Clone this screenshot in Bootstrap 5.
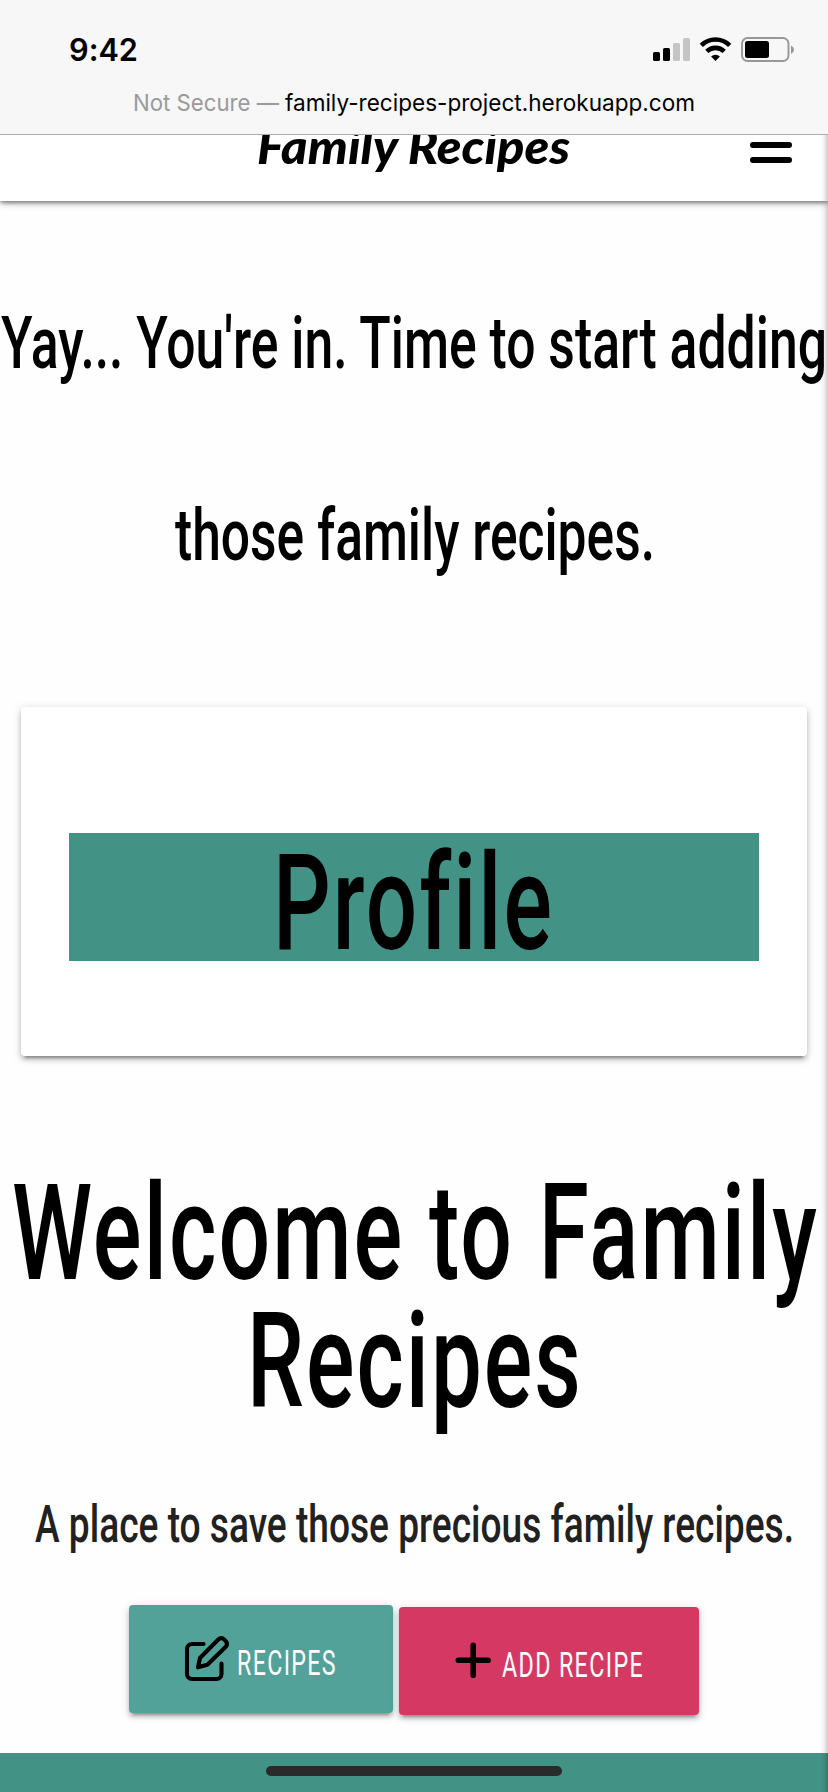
<!DOCTYPE html>
<html lang="en">
<head>
<meta charset="utf-8">
<meta name="viewport" content="width=device-width, initial-scale=1">
<title>Family Recipes</title>
<link href="https://cdn.jsdelivr.net/npm/bootstrap@5.3.0/dist/css/bootstrap.min.css" rel="stylesheet">
<style>
  body { background: #fefefe; font-family: Roboto, sans-serif; color: #000; }
  .screen { width: 828px; height: 1792px; }
  .browser-bar { height: 135px; background: #f7f7f7; border-bottom: 1px solid #adadad; }
  .status-row { height: 75px; padding: 24px 34px 0 70px; }
  .status-icons { margin-top: 10px; }
  .topnav { height: 66px; background: #fff; box-shadow: 0 2px 3px rgba(0,0,0,.28), 0 1px 9px rgba(0,0,0,.22), 0 4px 6px -2px rgba(0,0,0,.2); }
  svg { display: block; flex: none; overflow: visible; }
  svg text { font-family: Roboto, sans-serif; font-weight: 500; font-variant-ligatures: none; }
  text.brand-script { font-family: Lato, sans-serif; font-weight: 900; font-style: italic; font-size: 47px; }
  text.time-text { font-family: Inter, sans-serif; font-weight: 600; font-size: 31.5px; }
  text.url-text { font-family: Inter, sans-serif; font-weight: 400; font-size: 23.5px; }
  text.action-label { font-weight: 400; font-size: 34.3px; letter-spacing: 2px; fill: #fff; }
  text.display-line { letter-spacing: 3px; }
  .greeting { padding-top: 18px; height: 506px; }
  .profile-card { width: 786px; height: 349px; margin-left: 21px; padding: 126px 48px 0; border: 0; border-radius: 4px; background: #fff; box-shadow: 0 4px 4px rgba(0,0,0,.16), 0 6px 2px -4px rgba(0,0,0,.25), 0 2px 10px rgba(0,0,0,.18); }
  .profile-band { height: 128px; background: #429386; }
  .welcome { height: 549px; padding-top: 95px; }
  .action { height: 108px; border-radius: 4px; border: 0; padding: 0; box-shadow: 0 4px 4px rgba(0,0,0,.18), 0 6px 2px -4px rgba(0,0,0,.2), 0 2px 10px rgba(0,0,0,.16); }
  .action-recipes { width: 264px; background: #53a299; }
  .action-add { width: 300px; background: #d63864; margin-top: 2px; }
  .actions { gap: 6px; }
  .page-footer { height: 39px; background: #429386; padding-top: 13px; }
  .home-bar { width: 296px; height: 10px; background: #2a2a2a; }
  .drawer-edge { top: 135px; right: 0; width: 8px; height: 1657px; background: linear-gradient(to right, rgba(0,0,0,0), rgba(0,0,0,.05) 50%, rgba(0,0,0,.2)); }
</style>
</head>
<body>
<div class="screen position-relative overflow-hidden d-flex flex-column">
  <header class="browser-bar flex-shrink-0 position-relative z-3">
    <div class="status-row d-flex justify-content-between">
      <svg width="70" height="44"><text class="time-text" x="-1" y="37" textLength="69" lengthAdjust="spacingAndGlyphs">9:42</text></svg>
      <svg class="status-icons" width="142" height="30" viewBox="652 34 142 30">
        <rect x="653" y="52" width="7" height="9" rx="1.6"/><rect x="663" y="48" width="7" height="13" rx="1.6"/>
        <rect x="673" y="43" width="7" height="18" rx="1.6" fill="#c5c5c5"/><rect x="683" y="38" width="7" height="23" rx="1.6" fill="#c5c5c5"/>
        <g fill="none" stroke="#000" stroke-width="4.6"><path d="M701.3 45.3a20.2 20.2 0 0 1 28.4 0"/><path d="M706.8 51.4a12.4 12.4 0 0 1 17.4 0"/></g>
        <path d="M715.5 61l-4.4-4.4a6.4 6.4 0 0 1 8.8 0z"/>
        <rect x="742" y="38" width="46.5" height="23" rx="5.5" fill="none" stroke="#979797" stroke-width="1.9"/>
        <rect x="745" y="41" width="24" height="17" rx="2.5"/><path d="M791 45.5q3 1.5 3 4.3t-3 4.3z" fill="#979797"/>
      </svg>
    </div>
    <svg width="828" height="58" viewBox="0 75 828 58">
      <text class="url-text" x="133" y="111" fill="#9a9a9a" textLength="146" lengthAdjust="spacingAndGlyphs">Not Secure —</text>
      <text class="url-text" x="285" y="111" textLength="410" lengthAdjust="spacingAndGlyphs">family-recipes-project.herokuapp.com</text>
    </svg>
  </header>
  <nav class="topnav flex-shrink-0 position-relative">
    <svg width="828" height="66" viewBox="0 135 828 66">
      <text class="brand-script" x="257" y="164" textLength="313" lengthAdjust="spacingAndGlyphs">Family Recipes</text>
      <path d="M753 145h36M753 160h36" stroke="#000" stroke-width="6" stroke-linecap="round"/>
    </svg>
  </nav>
  <main>
    <section class="greeting">
      <svg width="828" height="420" viewBox="0 219 828 420">
        <text font-size="73" x="1" y="368" textLength="826" lengthAdjust="spacingAndGlyphs">Yay... You're in. Time to start adding</text>
        <text font-size="73" x="175" y="560" textLength="480" lengthAdjust="spacingAndGlyphs">those family recipes.</text>
      </svg>
    </section>
    <section class="card profile-card">
      <div class="profile-band">
        <svg width="690" height="128" viewBox="69 833 690 128"><text class="display-line" font-size="134" x="273" y="949" textLength="281" lengthAdjust="spacingAndGlyphs">Profile</text></svg>
      </div>
    </section>
    <section class="welcome">
      <svg width="828" height="430" viewBox="0 1151 828 430">
        <text class="display-line" font-size="134" x="12" y="1279" textLength="807" lengthAdjust="spacingAndGlyphs">Welcome to Family</text>
        <text class="display-line" font-size="134" x="247" y="1407" textLength="336" lengthAdjust="spacingAndGlyphs">Recipes</text>
        <text font-size="52" x="35" y="1542" fill="#212121" textLength="759" lengthAdjust="spacingAndGlyphs">A place to save those precious family recipes.</text>
      </svg>
    </section>
    <div class="actions d-flex justify-content-center align-items-start">
      <a class="btn action action-recipes" href="#">
        <svg width="264" height="108" viewBox="129 1605 264 108">
          <g transform="translate(185 1636)" fill="none" stroke="#000" stroke-width="4.1" stroke-linecap="round" stroke-linejoin="round"><path d="M18.5 8H7a5 5 0 0 0-5 5v25a5 5 0 0 0 5 5h24.5a5 5 0 0 0 5-5V27.5"/><path d="M13 31.3l2-9.3L33 3.7q3.2-3.2 6.5 0 4.2 3.7 1.3 7L22.3 28.8z"/></g>
          <text class="action-label" x="237" y="1675" textLength="100" lengthAdjust="spacingAndGlyphs">RECIPES</text>
        </svg>
      </a>
      <a class="btn action action-add" href="#">
        <svg width="300" height="108" viewBox="399 1607 300 108">
          <path d="M458.3 1660.3h29.8M473.2 1645.4v29.8" stroke="#000" stroke-width="5.6" stroke-linecap="round"/>
          <text class="action-label" x="502" y="1677" textLength="142" lengthAdjust="spacingAndGlyphs">ADD RECIPE</text>
        </svg>
      </a>
    </div>
  </main>
  <footer class="page-footer mt-auto flex-shrink-0 d-flex justify-content-center">
    <div class="home-bar rounded-pill"></div>
  </footer>
  <div class="drawer-edge position-absolute"></div>
</div>
<script src="https://cdn.jsdelivr.net/npm/bootstrap@5.3.0/dist/js/bootstrap.bundle.min.js"></script>
</body>
</html>
